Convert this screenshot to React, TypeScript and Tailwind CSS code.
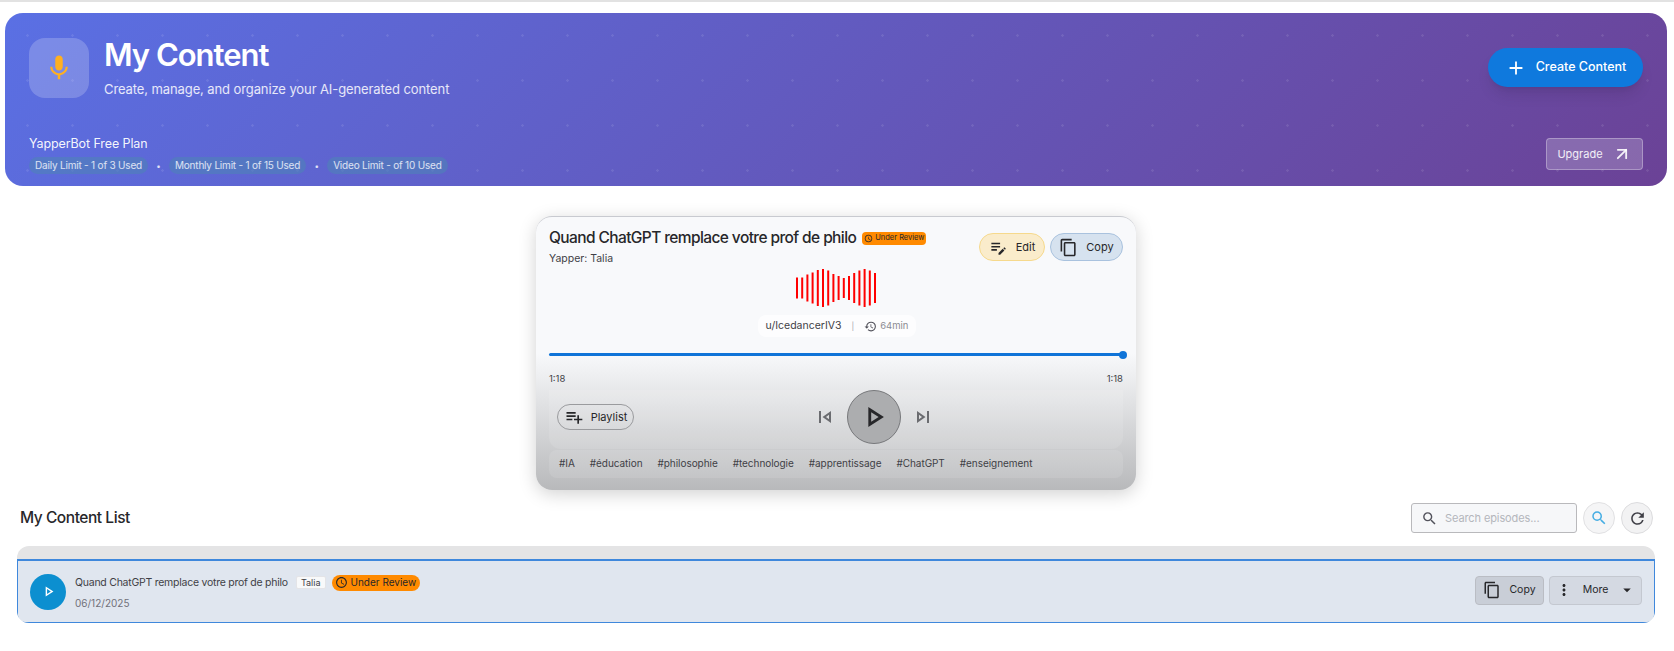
import {
  MdAdd,
  MdArrowDropDown,
  MdEditNote,
  MdHistory,
  MdMic,
  MdMoreVert,
  MdOutlineAccessTime,
  MdOutlineContentCopy,
  MdOutlinePlayArrow,
  MdOutlineSkipNext,
  MdOutlineSkipPrevious,
  MdPlaylistAdd,
  MdRefresh,
  MdSearch,
} from "react-icons/md";
import { ArrowUpRight } from "lucide-react";

const limits = ["Daily Limit - 1 of 3 Used", "Monthly Limit - 1 of 15 Used", "Video Limit - of 10 Used"];
const tags = ["#IA", "#éducation", "#philosophie", "#technologie", "#apprentissage", "#ChatGPT", "#enseignement"];
const bars = [21, 21, 27, 31, 36, 38, 35, 28, 24, 20, 24, 30, 35, 38, 35, 30];

function Waveform() {
  return (
    <svg width="82" height="44" viewBox="0 0 82 44" fill="none">
      {bars.map((h, i) => (
        <rect key={i} x={i * 5.2} y={22 - h / 2} width="2" height={h} fill="#ff0000" />
      ))}
    </svg>
  );
}

export default function App() {
  return (
    <div className="min-h-[651px] bg-white font-['Inter',sans-serif] text-[#27272a] border-t-2 border-[#e2e2e2] overflow-hidden">
      {/* Header banner */}
      <header className="mx-[5px] mt-[11px] h-[173px] w-[1662px] rounded-[18px] px-6 pt-6 pb-3 flex flex-col justify-between text-white bg-[radial-gradient(circle,rgba(255,255,255,0.09)_1px,transparent_1.5px),linear-gradient(135deg,#5a70e4_0%,#6b4296_100%)] bg-[length:45px_45px,100%_100%]">
        <div className="flex items-start justify-between">
          <div className="flex items-center gap-[15px]">
            <div className="w-[60px] h-[60px] rounded-2xl bg-white/20 flex items-center justify-center">
              <MdMic className="w-[30px] h-[30px] text-[#ffb020]" />
            </div>
            <div className="-mt-[2px]">
              <h1 className="text-[31px] leading-10 font-semibold tracking-[-1px]">My Content</h1>
              <p className="text-[13px] leading-5 mt-[4px] tracking-[-0.1px] text-white/85">Create, manage, and organize your AI-generated content</p>
            </div>
          </div>
          <button className="mt-[11px] w-[155px] h-[39px] rounded-full bg-[#0f79dd] shadow-lg flex items-center justify-center gap-[9px] text-[12.5px] font-medium">
            <MdAdd className="w-[22px] h-[22px]" />
            Create Content
          </button>
        </div>
        <div className="flex items-end justify-between">
          <div>
            <div className="text-[12.5px] leading-5 -tracking-[0.1px] text-white/95">YapperBot Free Plan</div>
            <div className="flex items-center text-[10px] tracking-[-0.2px] text-white/80 mt-[3px]">
              {limits.map((limit, i) => (
                <div key={limit} className="flex items-center">
                  {i > 0 && <span className="w-[21px] text-center text-[8px]">•</span>}
                  <span className="h-[17px] px-[6px] rounded-full bg-[#4f82b8]/60 flex items-center">{limit}</span>
                </div>
              ))}
            </div>
          </div>
          <button className="mb-[4px] w-[97px] h-[32px] rounded border border-white/30 bg-white/20 flex items-center justify-center gap-[9px] text-[11px] text-white/90">
            Upgrade
            <ArrowUpRight className="w-[20px] h-[20px]" strokeWidth={2.2} />
          </button>
        </div>
      </header>

      {/* Player card */}
      <section className="mt-[30px] mx-auto w-[600px] h-[274px] translate-x-[-1px] rounded-2xl border-t border-[#c8cad0] shadow-[0_4px_18px_rgba(0,0,0,0.18)] px-[13px] pt-[11px] bg-[linear-gradient(180deg,#f8f9fb_0%,#f8f9fb_50%,#b8b9bb_100%)]">
        <div className="flex items-start justify-between">
          <div>
            <div className="flex items-center gap-[6px]">
              <h2 className="text-[15.5px] leading-5 font-medium tracking-[-0.6px]">Quand ChatGPT remplace votre prof de philo</h2>
              <span className="h-[13px] px-[2px] rounded-[4px] bg-[#ff8a00] flex items-center gap-[2px] text-[7.5px] text-[#27272a]">
                <MdOutlineAccessTime className="w-[9px] h-[9px]" />
                Under Review
              </span>
            </div>
            <div className="text-[10.5px] leading-4 mt-[3px] text-[#3f3f46]">Yapper: Talia</div>
          </div>
          <div className="flex gap-[5px] mt-[5px]">
            <button className="w-[66px] h-[28px] rounded-full border border-[#f6d98c] bg-[#faeccb] flex items-center justify-center gap-[8px] text-[11px]">
              <MdEditNote className="w-[19px] h-[19px]" />
              Edit
            </button>
            <button className="w-[73px] h-[28px] rounded-full border border-[#a9c2de] bg-[#d6e2ef] flex items-center justify-center gap-[8px] text-[11px]">
              <MdOutlineContentCopy className="w-[19px] h-[19px]" />
              Copy
            </button>
          </div>
        </div>

        <div className="flex flex-col items-center -mt-[1px]">
          <div className="translate-x-[1px]"><Waveform /></div>
          <div className="mt-[5px] h-[22px] px-2 rounded-lg bg-white/70 translate-x-[1px] flex items-center gap-[10px] text-[10.5px] text-[#3f3f46]">
            <span>u/IcedancerIV3</span>
            <span className="text-[8px] text-[#a1a1aa]">|</span>
            <span className="flex items-center gap-[3px] text-[9.5px] text-[#8b8b92]">
              <MdHistory className="w-[13px] h-[13px] text-[#52525b]" />
              64min
            </span>
          </div>
        </div>

        <div className="mt-[16px] relative h-[3px] rounded-full bg-[#0f74d8]">
          <span className="absolute -right-[4px] -top-[2.5px] w-2 h-2 rounded-full bg-[#0f74d8]" />
        </div>
        <div className="mt-[17px] flex justify-between text-[9.5px] leading-3 text-[#3f3f46]">
          <span>1:18</span>
          <span>1:18</span>
        </div>

        <div className="mt-[5px] h-[59px] rounded-b-xl bg-white/10 pl-2 pb-[5px] flex items-center relative">
          <button className="w-[77px] h-[26px] rounded-full border border-[#9a9b9e] flex items-center justify-center gap-[7px] text-[11px]">
            <MdPlaylistAdd className="w-[20px] h-[20px]" />
            Playlist
          </button>
          <div className="absolute left-[264px] top-0 flex items-center gap-[10px]">
            <MdOutlineSkipPrevious className="w-[24px] h-[24px] text-[#6b6c70]" />
            <button className="w-[54px] h-[54px] rounded-full border border-[#77787b] bg-[#acadaf] flex items-center justify-center">
              <MdOutlinePlayArrow className="w-[34px] h-[34px] text-[#27272a]" />
            </button>
            <MdOutlineSkipNext className="w-[24px] h-[24px] text-[#6b6c70]" />
          </div>
        </div>

        <div className="mt-px h-[28px] rounded-lg bg-white/10 px-[10px] pb-[1px] flex items-center gap-[15px] text-[10px] tracking-[-0.05px] text-[#3f3f46]">
          {tags.map((tag) => (
            <span key={tag}>{tag}</span>
          ))}
        </div>
      </section>

      {/* List toolbar */}
      <div className="mt-[12px] ml-[20px] mr-[21px] h-[32px] flex items-center justify-between">
        <h3 className="text-[15.5px] font-medium tracking-[-0.45px]">My Content List</h3>
        <div className="flex items-center gap-[6px]">
          <div className="w-[166px] h-[30px] rounded-[3px] border border-[#b9b9bc] bg-[#f6f7f9] flex items-center gap-[7px] px-[9px] text-[11px] tracking-[-0.1px] text-[#b4b6bc]">
            <MdSearch className="w-[17px] h-[17px] text-[#52525b]" />
            Search episodes...
          </div>
          <button className="w-[32px] h-[32px] rounded-full border border-[#e1e1e3] bg-[#f5f5f6] flex items-center justify-center">
            <MdSearch className="w-[18px] h-[18px] text-[#45ade3]" />
          </button>
          <button className="w-[32px] h-[32px] rounded-full border border-[#dcdcde] bg-[#f2f2f3] flex items-center justify-center">
            <MdRefresh className="w-[19px] h-[19px] text-[#3f3f46]" />
          </button>
        </div>
      </div>

      {/* Content list */}
      <div className="mt-[12px] ml-[17px] w-[1638px] rounded-xl overflow-hidden bg-[#e4e4e5]">
        <div className="h-[13px]" />
        <div className="h-[64px] border border-[#3f88dc] border-t-2 rounded-b-lg bg-[#e0e6ef] pl-[12px] pr-[12px] flex items-center justify-between">
          <div className="flex items-center gap-[9px]">
            <button className="w-[36px] h-[36px] rounded-full bg-[#0c8fd0] flex items-center justify-center">
              <MdOutlinePlayArrow className="w-[17px] h-[17px] text-white" />
            </button>
            <div>
              <div className="flex items-center">
                <span className="text-[10.5px] tracking-[-0.25px] text-[#3f3f46]">Quand ChatGPT remplace votre prof de philo</span>
                <span className="ml-[8px] h-[13px] px-[4px] rounded-[2px] border border-[#e4e4e7] bg-[#f8f9fa] flex items-center text-[9px] text-[#3f3f46]">Talia</span>
                <span className="ml-[6px] h-[16px] pl-[3px] pr-[4px] rounded-full bg-[#ff8a00] flex items-center gap-[3px] text-[10px] text-[#27272a]">
                  <MdOutlineAccessTime className="w-[13px] h-[13px]" />
                  Under Review
                </span>
              </div>
              <div className="mt-[6px] text-[10px] leading-3 text-[#71717a]">06/12/2025</div>
            </div>
          </div>
          <div className="flex gap-[5px] -mt-[3px]">
            <button className="w-[69px] h-[29px] rounded border border-[#babdc4] bg-[#c9ced7] flex items-center justify-center gap-[8px] text-[10.5px]">
              <MdOutlineContentCopy className="w-[18px] h-[18px]" />
              Copy
            </button>
            <button className="w-[93px] h-[29px] rounded border border-[#c4c8d0] bg-[#d4d9e2] flex items-center justify-center gap-[10px] text-[10.5px]">
              <MdMoreVert className="w-[18px] h-[18px]" />
              More
              <MdArrowDropDown className="w-[18px] h-[18px]" />
            </button>
          </div>
        </div>
      </div>
    </div>
  );
}
